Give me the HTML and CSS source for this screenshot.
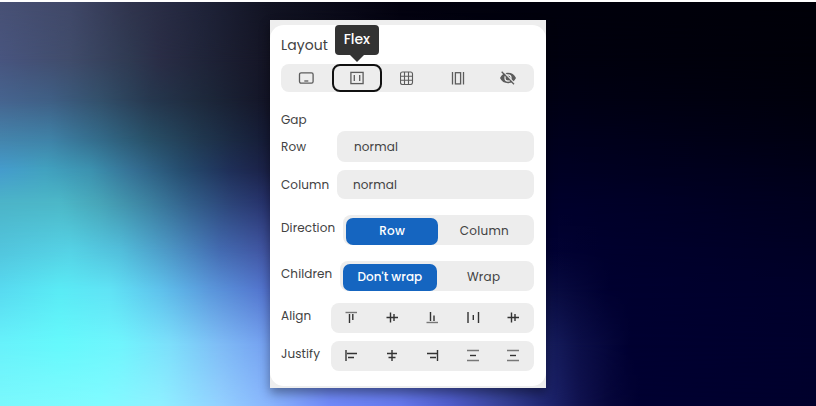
FILE: index.html
```html
<!DOCTYPE html>
<html lang="en">
<head>
<meta charset="utf-8">
<title>Layout</title>
<link rel="stylesheet" href="styles.css">
</head>
<body>
<div class="backdrop"><i class="b1"></i><i class="b2"></i><i class="b3"></i><i class="b4"></i><i class="b5"></i><i class="b6"></i><i class="b7"></i><i class="b8"></i><i class="b9"></i><i class="b10"></i></div>
<main class="frame">
<section class="panel">
<h1>Layout</h1>
<div class="bar display">
<button><svg width="16" height="16" viewBox="0 0 16 16"><rect x="1.500" y="2.800" width="13.600" height="10.400" rx="1.600"/><path d="M6.300 11h4"/></svg></button>
<button class="focus"><svg width="14" height="14" viewBox="0 0 14 14"><rect x=".9" y="1.400" width="12.200" height="11.200"/><path d="M4.300 4v6M9.700 4v6"/></svg><span class="tip">Flex</span></button>
<button><svg class="thin" width="14" height="14" viewBox="0 0 14 14"><rect x=".5" y="1" width="12" height="12.500" rx="2"/><path d="M4.500 1v12.500M8.500 1v12.500M.5 5.200h12M.5 9.300h12"/></svg></button>
<button><svg width="14" height="14" viewBox="0 0 14 14"><path d="M1.500 1v12.500M12.500 1v12.500"/><rect x="4.400" y="1.700" width="5.200" height="11.200"/></svg></button>
<button><svg width="16" height="16" viewBox="0 0 16 16"><path class="fill" d="M0 8Q2.500 2.800 8 2.800T16 8Q13.500 13.200 8 13.200T0 8Z"/><circle class="pupil" cx="8" cy="8" r="3"/><circle class="fill" cx="8" cy="8" r="2.200"/><path class="cut" d="M2.700 1 15 13.800"/><path d="M1.700 1.700 14 14.300"/></svg></button>
</div>
<h2>Gap</h2>
<div class="row first"><label class="w-row">Row</label><div class="bar field">normal</div></div>
<div class="row second"><label class="w-col">Column</label><div class="bar field">normal</div></div>
<div class="row direction"><label class="w-direction">Direction</label><div class="bar choices"><button class="on">Row</button><button class="col">Column</button></div></div>
<div class="row children"><label class="w-children">Children</label><div class="bar choices"><button class="on dont">Don't wrap</button><button>Wrap</button></div></div>
<div class="row align"><label class="w-align">Align</label><div class="bar icons">
<svg viewBox="0 0 14 14"><path class="soft" d="M1.500 1.500h11.500"/><path d="M5.500 3v9M8.800 3v6"/></svg>
<svg viewBox="0 0 14 14"><path d="M1.500 6.500h11.500M5.500 1.500v10M9 3v7"/></svg>
<svg viewBox="0 0 14 14"><path class="soft" d="M1.500 11.500h11.500"/><path d="M5.500 1v9M9 4.500v5.500"/></svg>
<svg viewBox="0 0 14 14"><path d="M2 1v11M12.500 1v11M7.300 4v5"/></svg>
<svg viewBox="0 0 14 14"><path d="M1.500 6.500h11.500M5.500 1.500v10M9 3v7"/></svg>
</div></div>
<div class="row justify"><label class="w-justify">Justify</label><div class="bar icons">
<svg viewBox="0 0 14 14"><path d="M2 1v11M3 4.500h10M4 8.500h6"/></svg>
<svg viewBox="0 0 14 14"><path d="M7 1v11M2 4.500h10M3.500 8.500h7"/></svg>
<svg viewBox="0 0 14 14"><path d="M12.500 1v11M2 4.500h10M5 8.500h6"/></svg>
<svg viewBox="0 0 14 14"><path class="soft" d="M1 1.500h12M1 11.500h12"/><path d="M4 6.500h6"/></svg>
<svg viewBox="0 0 14 14"><path class="soft" d="M1 1.500h12M1 11.500h12"/><path d="M4 6.500h6"/></svg>
</div></div>
</section>
</main>
</body>
</html>
```
FILE: styles.css
```css
* { box-sizing: border-box; }
body { margin: 0; padding-top: 20px; height: 406px; overflow: hidden; position: relative; background: #fff; color: #424242; font-family: Poppins, Inter, sans-serif; font-size: 12px; }
.backdrop { position: absolute; inset: 2px 0 0; overflow: hidden; background: #000; }
.backdrop i { position: absolute; left: 0; right: 0; bottom: 0; top: var(--from); -webkit-mask-image: linear-gradient(transparent, #000 var(--fade)); mask-image: linear-gradient(transparent, #000 var(--fade)); }
.b1 { --from: 0px; --fade: 0px; background: linear-gradient(90deg, #485175 0, #404868 70px, #30344d 130px, #20243a 200px, #111322 270px, #02010e 400px, #00000c 546px, #000008 816px); }
.b2 { --from: 0px; --fade: 58px; background: linear-gradient(90deg, #48557f 0, #404c6b 70px, #2f3a52 130px, #2a2d46 160px, #20253a 200px, #141424 270px, #00000f 546px, #000009 816px); }
.b3 { --from: 58px; --fade: 40px; background: linear-gradient(90deg, #46648f 0, #3f5f85 50px, #33506b 100px, #26384f 150px, #1e2a3d 200px, #131426 270px, #000015 546px, #00000c 816px); }
.b4 { --from: 98px; --fade: 40px; background: linear-gradient(90deg, #4485ad 0, #3f83a8 50px, #336b8a 100px, #285068 150px, #203850 200px, #151a35 270px, #00001e 546px, #000012 816px); }
.b5 { --from: 138px; --fade: 30px; background: linear-gradient(90deg, #459ccd 0, #41a2c0 45px, #3c92b0 90px, #367296 130px, #264e70 180px, #1f2f58 230px, #1a2045 270px, #000024 546px, #000018 816px); }
.b6 { --from: 168px; --fade: 33px; background: linear-gradient(90deg, #4cb4c8 0, #4cb8c8 60px, #47a5b8 100px, #3c80a0 150px, #325f8a 190px, #2c4478 230px, #26306a 270px, #00002c 546px, #00001e 816px); }
.b7 { --from: 201px; --fade: 47px; background: linear-gradient(90deg, #52c5dd 0, #55d2e5 70px, #52bedb 120px, #4c96c5 170px, #436ab0 220px, #40529f 270px, #020234 546px, #00002e 600px, #000024 816px); }
.b8 { --from: 248px; --fade: 40px; background: linear-gradient(90deg, #58daf0 0, #5aebf5 60px, #60e3f5 110px, #5fc2ec 160px, #5b98dc 210px, #5270cc 270px, #0a0d43 546px, #000030 610px, #00002a 816px); }
.b9 { --from: 288px; --fade: 55px; background: linear-gradient(90deg, #68f2fb 0, #66f9fc 60px, #70f5fd 120px, #7ddffb 170px, #7fbcf6 220px, #759ff0 270px, #181f60 546px, #0c0f48 580px, #000031 630px, #00002c 816px); }
.b10 { --from: 343px; --fade: 60px; background: linear-gradient(90deg, #7af8fc 0, #80fbff 100px, #8ef0ff 160px, #93d0ff 220px, #88b4fc 270px, #7088f8 330px, #6578ec 400px, #505dcc 450px, #38439a 500px, #1f2670 546px, #10124e 580px, #06063a 610px, #000031 640px, #00002c 816px); }
.frame { position: relative; width: 276px; height: 368px; margin: 0 auto; padding-top: 5px; background: #eee; box-shadow: 0 5px 10px rgba(0,0,0,.38); }
.panel { height: 361px; padding: 11px 12.500px 0 11px; border-radius: 14px; background: #fff; display: flex; flex-direction: column; }
h1 { margin: 0; height: 28px; font-size: 14px; line-height: 18px; font-weight: 400; letter-spacing: .1px; }
h2 { margin: 18px 0 0; height: 20px; font-size: 12px; line-height: 20px; font-weight: 400; }
.bar { background: #ededed; border-radius: 8px; }
button { border: 0; margin: 0; padding: 0; background: transparent; color: inherit; font: inherit; letter-spacing: .25px; }
.display { height: 28px; display: grid; grid-template-columns: repeat(5, 1fr); }
.display button { position: relative; display: flex; align-items: center; justify-content: center; }
.display .focus { border: 2px solid #111; border-radius: 8px; }
svg { fill: none; stroke: #5c5c5c; stroke-width: 1.300; }
.thin { stroke-width: 1.100; }
.fill { fill: #5c5c5c; stroke: none; }
.pupil { stroke: #ededed; }
.cut { stroke: #ededed; }
.tip { position: absolute; bottom: 35px; left: 50%; transform: translateX(-50%); width: 44px; height: 30px; border-radius: 4px; background: #333; color: #fff; font-size: 14px; line-height: 29px; font-weight: 500; letter-spacing: -.15px; }
.tip::after { content: ""; position: absolute; top: 29.500px; left: 15px; border: 7px solid transparent; border-top-color: #333; border-bottom: 0; }
.row { display: flex; }
.row label { flex: none; letter-spacing: .1px; }
.row .bar { flex: 1; }
.first { height: 31px; margin-top: 1px; line-height: 31px; }
.second { height: 29px; margin-top: 8px; line-height: 29px; }
.field { padding-left: 16px; letter-spacing: .12px; }
.first .field { padding-left: 17px; }
.direction { height: 30px; margin-top: 16px; line-height: 25px; }
.children { height: 30px; margin-top: 16px; line-height: 25px; }
.align { height: 30px; margin-top: 12px; line-height: 25px; }
.justify { height: 30px; margin-top: 8px; line-height: 25px; }
.w-row, .w-col { width: 56px; }
.w-direction { width: 62px; }
.w-children { width: 59px; }
.w-align, .w-justify { width: 50px; }
.choices { display: grid; grid-template-columns: 1fr 1fr; padding: 3px; }
.choices button { border-radius: 7px; padding-bottom: 2px; }
.choices .on { background: #1565c0; color: #fff; font-weight: 500; letter-spacing: .2px; }
.choices .dont { letter-spacing: .05px; }
.icons { display: grid; grid-template-columns: repeat(5, 1fr); align-items: center; justify-items: center; }
.icons svg { width: 14px; height: 14px; stroke: #333; stroke-width: 1.400; }
.icons .soft { stroke: #777; }
```
